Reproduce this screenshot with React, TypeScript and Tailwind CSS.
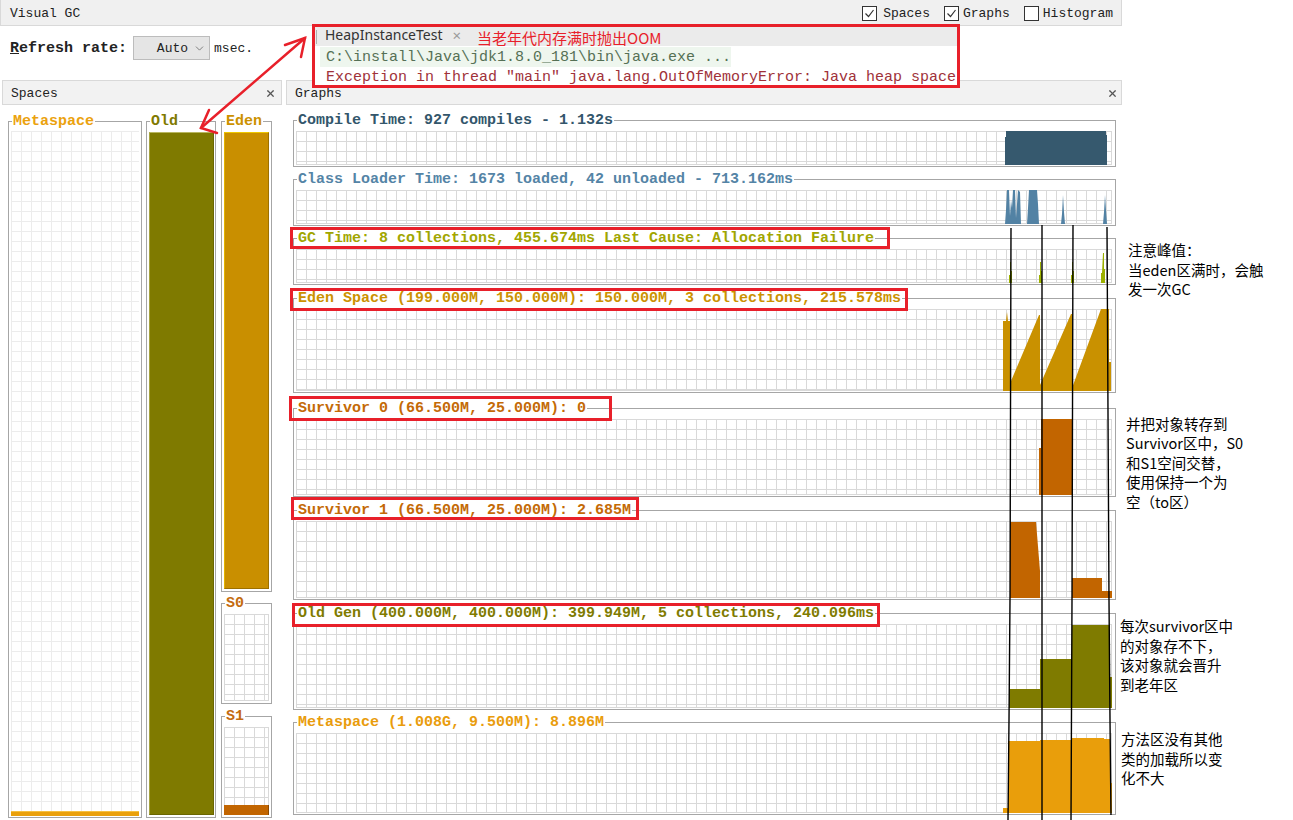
import React from "react";
import { ChevronDown, X } from "lucide-react";

const mono = "font-['Liberation_Mono',monospace]";
const cjk = "font-['Noto_Sans_CJK_SC',sans-serif]";
const gridBg =
  "bg-[linear-gradient(to_right,#d9d9d9_1px,transparent_1px),linear-gradient(to_bottom,#d9d9d9_1px,transparent_1px)] bg-size-[10px_10px] shadow-[inset_-1px_-1px_0_#d9d9d9]";
const gridLight =
  "bg-[linear-gradient(to_right,#ececec_1px,transparent_1px),linear-gradient(to_bottom,#ececec_1px,transparent_1px)] bg-size-[10px_10px]";

type Chart = {
  title: string;
  color: string;
  mt: string;
  h: string;
  vh: number;
  fill: string;
  shapes: string[];
};

const charts: Chart[] = [
  {
    title: "Compile Time: 927 compiles - 1.132s ",
    color: "text-[#33566b]",
    mt: "mt-0",
    h: "h-[34px]",
    vh: 34,
    fill: "#36596e",
    shapes: ["709,34 709,6 710,6 710,0 810,0 810,4 811,4 811,34"],
  },
  {
    title: "Class Loader Time: 1673 loaded, 42 unloaded - 713.162ms",
    color: "text-[#5484a6]",
    mt: "mt-[4px]",
    h: "h-[34px]",
    vh: 34,
    fill: "#5282a4",
    shapes: [
      "709,34 710,20 711,0 713,0 714,26 715,10 716,18 717,0 719,0 720,28 721,14 722,0 724,2 725,34",
      "731,34 732,18 733,0 741,0 742,14 743,34",
      "765,34 766,24 767,5 768,22 769,34",
      "807,34 808,22 809,5 810,20 811,34",
    ],
  },
  {
    title: "GC Time: 8 collections, 455.674ms Last Cause: Allocation Failure",
    color: "text-[#a1a600]",
    mt: "mt-[4px]",
    h: "h-[34px]",
    vh: 34,
    fill: "#9cb000",
    shapes: [
      "713,34 713,26 714,26 714,13 715,13 715,22 716,22 716,34",
      "743,34 743,26 744,26 744,13 745,13 745,22 746,22 746,34",
      "775,34 775,26 776,26 776,13 777,13 777,22 778,22 778,34",
      "805,34 805,24 806,24 807,4 808,4 808,20 809,20 809,34",
    ],
  },
  {
    title: "Eden Space (199.000M, 150.000M): 150.000M, 3 collections, 215.578ms",
    color: "text-[#cc9200]",
    mt: "mt-[5px]",
    h: "h-[82px]",
    vh: 82,
    fill: "#c99100",
    shapes: [
      "707,82 707,12 710,12 711,3 712,12 715,12 715,72 743,6 744,6 744,76 775,5 776,5 776,79 805,0 813,0 813,53 815,53 815,82",
    ],
  },
  {
    title: "Survivor 0 (66.500M, 25.000M): 0",
    color: "text-[#c46a06]",
    mt: "mt-[7px]",
    h: "h-[76px]",
    vh: 76,
    fill: "#c26500",
    shapes: ["743,76 743,29 745,29 745,0 776,0 776,76"],
  },
  {
    title: "Survivor 1 (66.500M, 25.000M): 2.685M",
    color: "text-[#c46a06]",
    mt: "mt-[5px]",
    h: "h-[77px]",
    vh: 77,
    fill: "#c26500",
    shapes: [
      "714,77 714,1 740,1 744,50 744,77",
      "776,77 776,57 806,57 806,70 816,70 816,77",
    ],
  },
  {
    title: "Old Gen (400.000M, 400.000M): 399.949M, 5 collections, 240.096ms",
    color: "text-[#7f7b00]",
    mt: "mt-[5px]",
    h: "h-[84px]",
    vh: 84,
    fill: "#7f7b00",
    shapes: ["713,84 713,65 744,65 744,35 776,35 776,1 814,1 814,53 816,53 816,84"],
  },
  {
    title: "Metaspace (1.008G, 9.500M): 8.896M",
    color: "text-[#e99c0c]",
    mt: "mt-[4px]",
    h: "h-[80px]",
    vh: 80,
    fill: "#e99e0b",
    shapes: [
      "707,80 707,75 712,75 712,8 744,8 744,7 776,7 776,5 808,5 808,6 814,6 814,50 816,50 816,80",
    ],
  },
];

const Check = ({ on }: { on: boolean }) => (
  <span className="w-[15px] h-[15px] border border-[#333] bg-white flex items-center justify-center">
    {on && (
      <svg width="11" height="11" viewBox="0 0 11 11">
        <polyline points="1.5,5.5 4.5,8.5 9.5,2" fill="none" stroke="#333" strokeWidth="1.2" />
      </svg>
    )}
  </span>
);

const ChartBox = ({ c }: { c: Chart }) => (
  <fieldset className={`${c.mt} border border-[#a6a6a6] pl-[2px] pr-[3px] pt-[3px] pb-[1px]`}>
    <legend className={`ml-[1px] px-[1px] pt-[1px] text-[15px] leading-[15px] font-bold ${c.color}`}>
      {c.title}
    </legend>
    <div className={`relative ${c.h} ${gridBg}`}>
      <svg
        className="absolute inset-0 w-full h-full"
        viewBox={`0 0 816 ${c.vh}`}
        preserveAspectRatio="none"
      >
        {c.shapes.map((p, i) => (
          <polygon key={i} points={p} fill={c.fill} />
        ))}
      </svg>
    </div>
  </fieldset>
);

const SpaceLegend = ({ text, color }: { text: string; color: string }) => (
  <legend className={`ml-[1px] px-[1px] pt-[1px] text-[15px] leading-[15px] font-bold ${color}`}>{text}</legend>
);

const redBoxes = [
  "left-[290px] top-[227px] w-[600px] h-[22px]",
  "left-[290px] top-[288px] w-[618px] h-[23px]",
  "left-[289px] top-[396px] w-[323px] h-[25px]",
  "left-[291px] top-[497px] w-[348px] h-[23px]",
  "left-[292px] top-[603px] w-[588px] h-[24px]",
];

const App: React.FC = () => {
  return (
    <div className={`relative w-[1293px] h-[820px] overflow-hidden bg-white text-[#222] ${mono}`}>
      <div className="flex">
        {/* Visual GC window */}
        <div className="w-[1122px] flex flex-col">
          <div className="h-[26px] pt-[2px] flex items-center bg-[#f0f0f0] border-l border-b border-r border-[#d9d9d9]">
            <span className="pl-[9px] text-[13px]">Visual GC</span>
            <div className="ml-auto mr-[8px] flex items-center gap-[14px] text-[13px]">
              <label className="flex items-center gap-[6px]">
                <Check on={true} />
                Spaces
              </label>
              <label className="flex items-center gap-[4px]">
                <Check on={true} />
                Graphs
              </label>
              <label className="flex items-center gap-[4px]">
                <Check on={false} />
                Histogram
              </label>
            </div>
          </div>

          <div className="h-[54px] flex items-start pt-[10px] pl-[10px]">
            <span className="text-[15px] leading-[26px] font-bold">
              <span className="underline">R</span>efresh rate:
            </span>
            <div className="ml-[6px] w-[77px] h-[24px] bg-[#e5e5e5] border border-[#bcbcbc] flex items-center justify-end pr-[3px] gap-[5px]">
              <span className="text-[13px] leading-[24px] pt-[2px]">Auto</span>
              <ChevronDown size={13} strokeWidth={1.3} color="#555" />
            </div>
            <span className="ml-[4px] text-[13px] leading-[26px]">msec.</span>
          </div>

          <div className="flex h-[740px]">
            {/* Spaces */}
            <div className="ml-[2px] w-[280px] flex flex-col">
              <div className="h-[25px] pt-[2px] flex items-center justify-between pl-[8px] pr-[5px] bg-[#f2f2f2] border border-[#d9d9d9]">
                <span className="text-[13px]">Spaces</span>
                <X size={11} strokeWidth={2.6} color="#555" />
              </div>
              <div className="flex pl-[6px] pt-[8px]">
                <fieldset className="w-[134px] border border-[#a6a6a6] px-[2px] pt-[2px] pb-[1px]">
                  <SpaceLegend text="Metaspace" color="text-[#eba20e]" />
                  <div className={`h-[685px] flex flex-col justify-end ${gridLight}`}>
                    <div className="h-[5px] bg-[#eaa00c] border-t border-[#f6c040]" />
                  </div>
                </fieldset>
                <fieldset className="ml-[4px] w-[70px] border border-[#a6a6a6] pl-[2px] pr-[1px] pt-[3px] pb-[2px]">
                  <SpaceLegend text="Old" color="text-[#7f7a00]" />
                  <div className="h-[683px] bg-[#7f7a00] border border-[#6a6600] border-t-[#b8b660] border-l-[#a6a340]" />
                </fieldset>
                <div className="ml-[5px] w-[51px] flex flex-col">
                  <fieldset className="border border-[#a6a6a6] px-[2px] pt-[3px] pb-[2px]">
                    <SpaceLegend text="Eden" color="text-[#cc9100]" />
                    <div className="h-[457px] bg-[#c98f00] border border-[#9c7000] border-t-[#f0c800] border-l-[#e4b400]" />
                  </fieldset>
                  <fieldset className="mt-[3px] border border-[#a6a6a6] px-[2px] pt-[3px] pb-[2px]">
                    <SpaceLegend text="S0" color="text-[#c46c10]" />
                    <div className={`h-[87px] ${gridBg}`} />
                  </fieldset>
                  <fieldset className="mt-[4px] border border-[#a6a6a6] px-[2px] pt-[3px] pb-[2px]">
                    <SpaceLegend text="S1" color="text-[#c46c10]" />
                    <div className={`h-[88px] flex flex-col justify-end ${gridBg}`}>
                      <div className="h-[10px] bg-[#c26500] border-r border-[#8a4800]" />
                    </div>
                  </fieldset>
                </div>
              </div>
            </div>

            {/* Graphs */}
            <div className="ml-[4px] w-[836px] flex flex-col">
              <div className="h-[25px] pt-[2px] flex items-center justify-between pl-[8px] pr-[3px] bg-[#f2f2f2] border border-[#d9d9d9]">
                <span className="text-[13px]">Graphs</span>
                <X size={11} strokeWidth={2.6} color="#555" />
              </div>
              <div className="flex flex-col pl-[7px] pr-[6px] pt-[7px]">
                {charts.map((c) => (
                  <ChartBox key={c.title} c={c} />
                ))}
              </div>
            </div>
          </div>
        </div>

        {/* notes on the right */}
        <div className={`flex-1 flex flex-col text-[14.5px] leading-[19.5px] text-black whitespace-nowrap ${cjk}`}>
          <div className="mt-[240px] pl-[6px]">
            <div>注意峰值：</div>
            <div>当eden区满时，会触</div>
            <div>发一次GC</div>
          </div>
          <div className="mt-[115px] pl-[4px]">
            <div>并把对象转存到</div>
            <div>Survivor区中，S0</div>
            <div>和S1空间交替，</div>
            <div>使用保持一个为</div>
            <div>空（to区）</div>
          </div>
          <div className="mt-[105px] -ml-[2px]">
            <div>每次survivor区中</div>
            <div>的对象存不下，</div>
            <div>该对象就会晋升</div>
            <div>到老年区</div>
          </div>
          <div className="mt-[35px] -ml-[1px]">
            <div>方法区没有其他</div>
            <div>类的加载所以变</div>
            <div>化不大</div>
          </div>
        </div>
      </div>

      {/* console popup pasted over the window */}
      <div className="absolute left-[312px] top-[24px] w-[648px] h-[64px] bg-white border-[3px] border-[#e8202a] flex flex-col">
        <div className="h-[19px] bg-[#ebebeb] flex items-start">
          <span className="ml-[1px] mt-[3px] w-[1px] h-[14px] bg-[#b0b0b0]" />
          <span className="ml-[8px] font-['Noto_Sans',sans-serif] text-[14px] leading-[16px] text-[#333]">
            HeapInstanceTest
          </span>
          <span className="ml-[10px] text-[#9a9a9a] text-[15px] leading-[16px] font-['Noto_Sans',sans-serif]">×</span>
          <span className={`ml-[16px] mt-[1px] text-[15px] leading-[19px] text-[#e8202a] ${cjk}`}>当老年代内存满时抛出OOM</span>
        </div>
        <div className="mt-[1px] ml-[5px] w-[411px] h-[20px] bg-[#eef6ee] flex items-center pl-[6px] pt-[2px] text-[15px] text-[#557055] whitespace-nowrap">
          {"C:\\install\\Java\\jdk1.8.0_181\\bin\\java.exe ..."}
        </div>
        <div className="ml-[11px] h-[20px] pt-[3px] flex items-center text-[15px] text-[#a0323a] whitespace-nowrap">
          Exception in thread "main" java.lang.OutOfMemoryError: Java heap space
        </div>
      </div>

      {/* red highlight boxes */}
      {redBoxes.map((b) => (
        <div key={b} className={`absolute ${b} border-[3px] border-[#e8202a] pointer-events-none`} />
      ))}

      {/* hand drawn arrow and marker lines */}
      <svg className="absolute inset-0 pointer-events-none" width="1293" height="820" viewBox="0 0 1293 820">
        <g stroke="#e8202a" strokeWidth="2.5" fill="none" strokeLinecap="round">
          <line x1="305" y1="38" x2="201" y2="128" />
          <polyline points="285,45 305,38 301,57" />
          <polyline points="209,110 201,128 217,133" />
        </g>
        <g stroke="#000" strokeWidth="1.4" fill="none">
          <polyline points="1011,228 1010,600 1009,720 1008,820" />
          <polyline points="1042,225 1042,820" />
          <polyline points="1073,225 1072,600 1071,820" />
          <polyline points="1107,227 1109,600 1110,720 1111,815" />
        </g>
      </svg>
    </div>
  );
};

export default App;
